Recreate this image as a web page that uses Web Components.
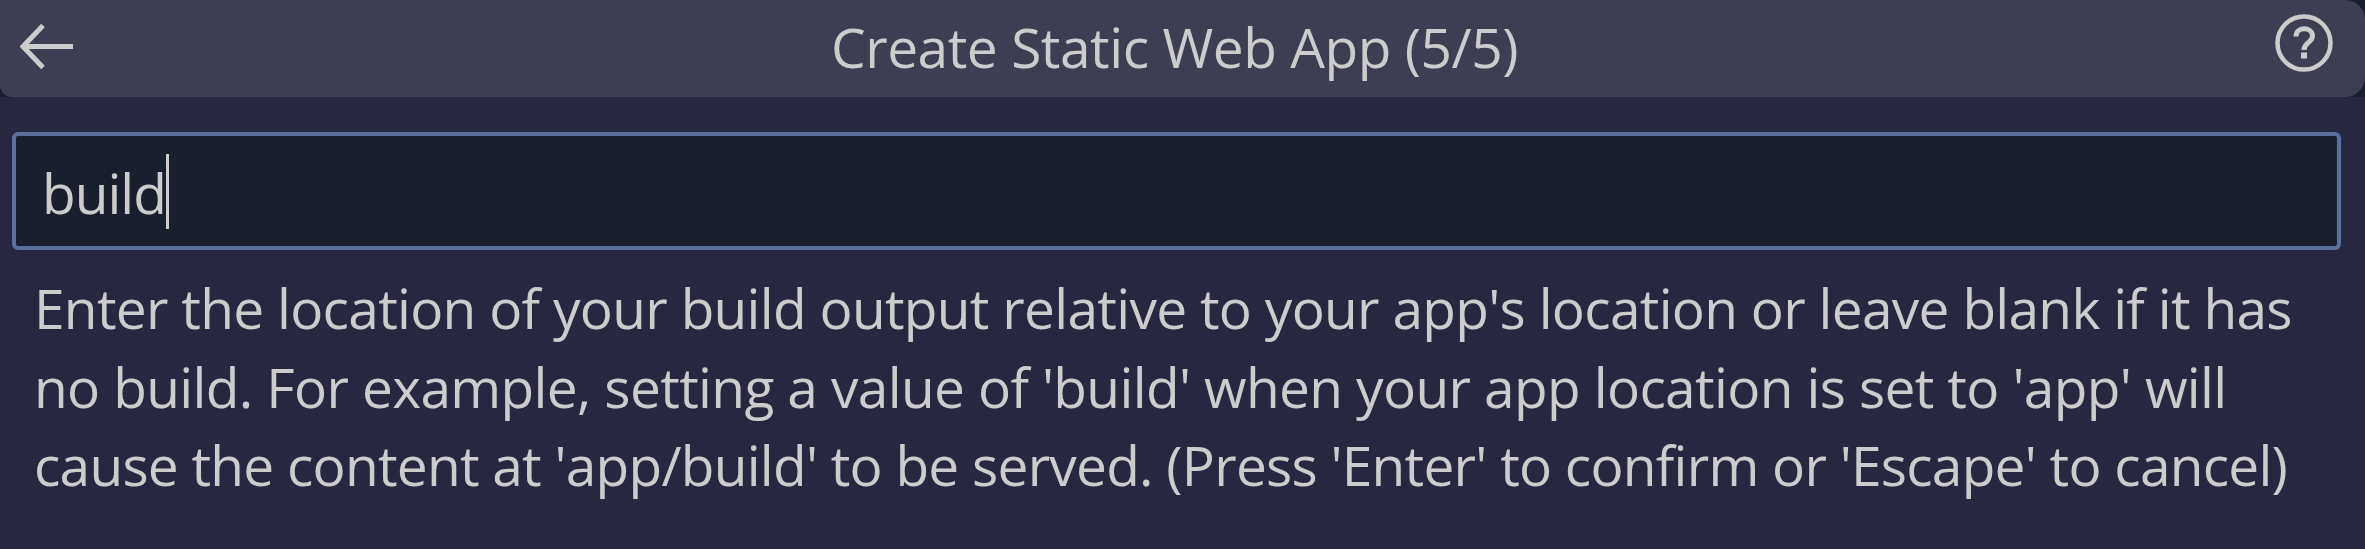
<!DOCTYPE html>
<html>
<head>
<meta charset="utf-8">
<title>Create Static Web App</title>
<style>
  html, body { margin: 0; height: 100%; background: #272740; }
  body { font-family: "Open Sans", "Noto Sans", sans-serif; color: #cccccc; overflow: hidden; }
</style>
</head>
<body>
<quick-input>
  <quick-title slot="title">Create Static Web App (5/5)</quick-title>
  <quick-box slot="box" value="build"></quick-box>
  <quick-message slot="message"><div>Enter the location of your build output relative to your app's location or leave blank if it has</div><div style="letter-spacing:-0.635px">no build. For example, setting a value of 'build' when your app location is set to 'app' will</div><div style="letter-spacing:-0.75px">cause the content at 'app/build' to be served. (Press 'Enter' to confirm or 'Escape' to cancel)</div></quick-message>
</quick-input>

<script>
class QuickInput extends HTMLElement {
  connectedCallback() {
    this.attachShadow({ mode: 'open' }).innerHTML = `
      <style>
        :host { display: flex; flex-direction: column; width: 2365px; height: 549px; background: #272740; }
      </style>
      <slot name="title"></slot>
      <slot name="box"></slot>
      <slot name="message"></slot>
    `;
  }
}

class QuickTitle extends HTMLElement {
  connectedCallback() {
    this.attachShadow({ mode: 'open' }).innerHTML = `
      <style>
        :host { display: block; background: #1a1f2e; }
        .bar {
          display: flex; align-items: center; justify-content: space-between;
          height: 97px; padding: 0 32px 0 20px; box-sizing: border-box;
          background: #3e3e53; border-radius: 0 20px 20px 12px;
        }
        .label { font-size: 55px; letter-spacing: -0.45px; line-height: 97px; color: #cccccc; margin-bottom: 4px; }
        svg { display: block; }
        .back { margin-bottom: 3px; }
        .help { margin-bottom: 11px; }
      </style>
      <div class="bar">
        <svg class="back" width="54" height="48" viewBox="0 0 54 48" fill="none" stroke="#cccccc" stroke-width="5">
          <path d="M53 23.500H3M23 2.500L3 23.500L23 44.500"/>
        </svg>
        <div class="label"><slot></slot></div>
        <svg class="help" width="58" height="58" viewBox="0 0 58 58" fill="none" stroke="#cccccc" stroke-width="4.500">
          <circle cx="29" cy="29" r="26.500"/>
          <path stroke-width="5" d="M21 22.500C21 12 37.500 12.500 37.500 22C37.500 28.500 29 28.500 29 36"/>
          <rect x="26" y="38.500" width="6" height="6" fill="#cccccc" stroke="none"/>
        </svg>
      </div>
    `;
  }
}

class QuickBox extends HTMLElement {
  connectedCallback() {
    this.attachShadow({ mode: 'open' }).innerHTML = `
      <style>
        :host { display: block; margin: 35px 24px 0 12px; }
        .field {
          display: flex; align-items: center;
          height: 118px; box-sizing: border-box; padding: 0 0 0 26px;
          background: #1a1f2e; border: 4px solid #5a6f9e; border-radius: 6px;
          font-size: 55px; color: #cccccc;
        }
        .text { letter-spacing: -1px; padding-top: 3px; }
        .caret { width: 3px; height: 75px; background: #cccccc; }
      </style>
      <div class="field"><span class="text">${this.getAttribute('value')}</span><span class="caret"></span></div>
    `;
  }
}

class QuickMessage extends HTMLElement {
  connectedCallback() {
    this.attachShadow({ mode: 'open' }).innerHTML = `
      <style>
        :host { display: block; padding: 19px 0 0 34px; font-size: 55px; letter-spacing: -0.7px; line-height: 78.5px; color: #cccccc; white-space: nowrap; }
      </style>
      <slot></slot>
    `;
  }
}

customElements.define('quick-input', QuickInput);
customElements.define('quick-title', QuickTitle);
customElements.define('quick-box', QuickBox);
customElements.define('quick-message', QuickMessage);
</script>
</body>
</html>
